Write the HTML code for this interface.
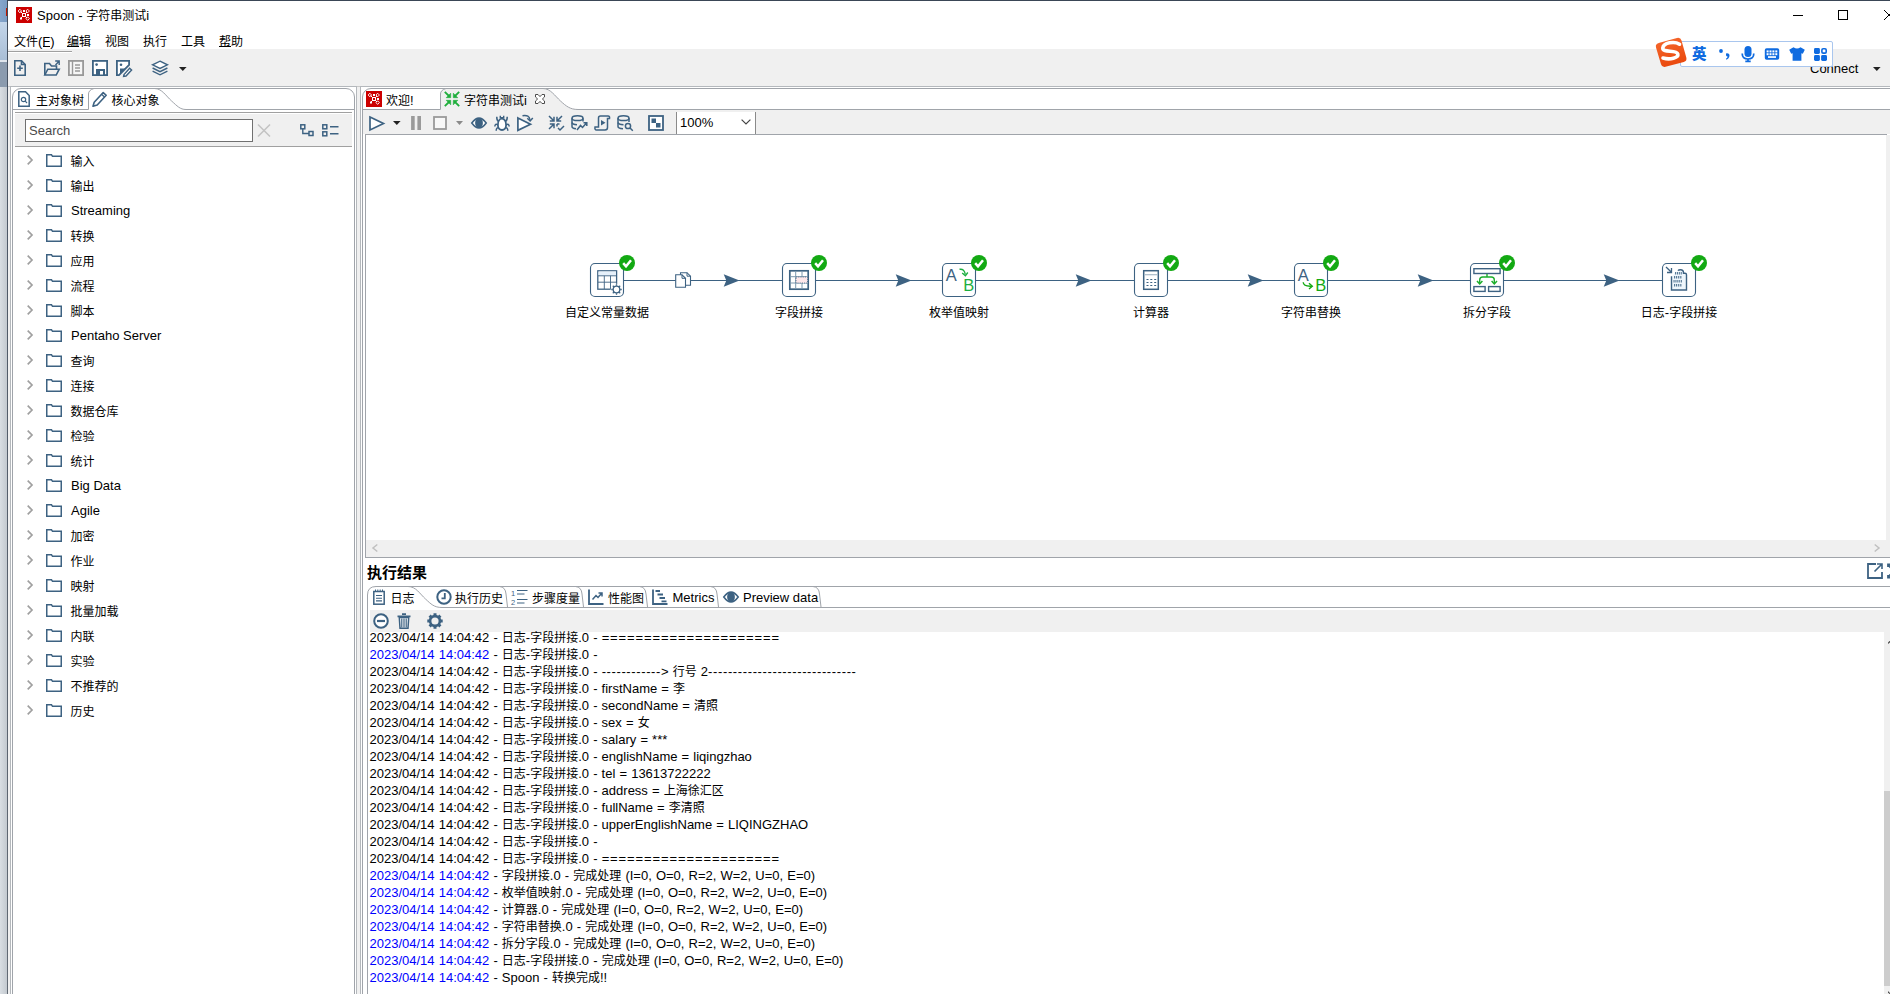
<!DOCTYPE html>
<html lang="zh-CN"><head><meta charset="utf-8"><title>Spoon</title>
<style>
html,body{margin:0;padding:0}
body{width:1890px;height:994px;overflow:hidden;position:relative;background:#fff;
 font-family:"Liberation Sans","Noto Sans CJK SC",sans-serif;font-size:13px;color:#000;line-height:16px}
.c{font-family:"Liberation Sans","Noto Sans CJK SC",sans-serif;font-size:12px;line-height:0}
.a{position:absolute}
.t{position:absolute;white-space:nowrap;height:16px;line-height:16px;margin-top:1px}
svg{position:absolute;overflow:visible}
.ln{position:absolute;background:#a0a0a0}
.bl{color:#0000ff}
.lg{word-spacing:0.5px}

</style></head>
<body>
<div class="a" style="left:0;top:0;width:7px;height:22px;background:linear-gradient(90deg,#86a6cc,#7a9bc2)"></div><div class="a" style="left:0;top:22px;width:7px;height:38px;background:linear-gradient(180deg,#c4d6ea,#a9bed6)"></div><div class="a" style="left:0;top:60px;width:7px;height:2px;background:#dfe5ec"></div><div class="a" style="left:0;top:62px;width:7px;height:25px;background:#8b9bae"></div><div class="a" style="left:0;top:87px;width:7px;height:907px;background:linear-gradient(90deg,#d9dee3,#c3c9cf)"></div><div class="a" style="left:6px;top:8px;width:1px;height:8px;background:#c01800"></div><div class="a" style="left:7px;top:0;width:1px;height:994px;background:linear-gradient(180deg,#3e4a5a 0,#4a5564 90px,#626a74 100%)"></div><div class="a" style="left:7px;top:0;width:1883px;height:1px;background:#3a4656"></div><div class="a" style="left:16px;top:7px;width:16px;height:16px;background:#cc0000"></div><svg style="left:16px;top:7px" width="16" height="16" viewBox="0 0 16 16"><g fill="none" stroke="#fff" stroke-width="1">
<rect x="6.5" y="6.5" width="3" height="3"/>
<path d="M6.5 6.5L4.5 4.5M9.5 6.5L11 5M6.5 9.5L5 11M9.5 9.5L11 11"/></g>
<g fill="#fff"><rect x="7" y="3" width="2" height="2"/><rect x="11" y="7" width="2" height="2"/><rect x="4" y="10.5" width="2" height="2"/></g>
<g fill="none" stroke="#fff" stroke-width="0.9"><path d="M3.8 2.2L5.6 4L3.8 5.8L2.2 4Z"/><path d="M11.6 2.2L13.4 4L11.6 5.8L10 4Z"/><path d="M11.6 9.8L13.4 11.6L11.6 13.4L10 11.6Z"/></g></svg><div class="t" style="left:37px;top:7px">Spoon - <span class="c">字符串测试</span>i</div><div class="a" style="left:1793px;top:15px;width:10px;height:1px;background:#000"></div><div class="a" style="left:1838px;top:10px;width:8px;height:8px;border:1px solid #000"></div><svg style="left:1884px;top:10px" width="10" height="10"><path d="M0 0L10 10M0 10L10 0" stroke="#000" stroke-width="1" fill="none"/></svg><div class="t" style="left:14px;top:33px"><span class="c">文件</span>(F)</div><div class="t" style="left:67px;top:33px"><span class="c">编辑</span></div><div class="t" style="left:105px;top:33px"><span class="c">视图</span></div><div class="t" style="left:143px;top:33px"><span class="c">执行</span></div><div class="t" style="left:181px;top:33px"><span class="c">工具</span></div><div class="t" style="left:219px;top:33px"><span class="c">帮助</span></div><div class="a" style="left:67px;top:46px;width:12px;height:1px;background:#000"></div><div class="a" style="left:219px;top:46px;width:12px;height:1px;background:#000"></div><div class="a" style="left:43px;top:46px;width:7px;height:1px;background:#000"></div><div class="a" style="left:8px;top:49px;width:1882px;height:945px;background:#f0f0f0"></div><div class="a" style="left:8px;top:51px;width:64px;height:1px;background:#a0a0a0"></div><div class="a" style="left:8px;top:52px;width:64px;height:1px;background:#fff"></div><svg style="left:14px;top:60px" width="12" height="16" viewBox="0 0 12 16"><path fill="none" stroke="#3d6282" stroke-width="1.6" d="M0.8 0.8H7.5L11.2 4.5V15.2H0.8Z"/><path fill="none" stroke="#3d6282" stroke-width="1.6" d="M7.5 0.8V4.5H11.2"/><path d="M6 5.5V11M3.2 8.2H8.8" stroke="#3d6282" stroke-width="1.6" fill="none"/></svg><svg style="left:44px;top:60px" width="16" height="16" viewBox="0 0 16 16"><path fill="none" stroke="#3d6282" stroke-width="1.6" d="M0.8 15V3.5H5.5L7.5 6H12.5V9"/><path fill="none" stroke="#3d6282" stroke-width="1.6" d="M0.8 15L3.8 9.2H15.2L12.2 15Z" fill="#fff"/><path d="M11.5 5L15 1.2M11.2 1H15.2V5" stroke="#3d6282" stroke-width="1.4" fill="none"/></svg><svg style="left:68px;top:60px" width="16" height="16" viewBox="0 0 16 16"><rect x="0.9" y="0.9" width="14.2" height="14.2" fill="#f6f6f6" stroke="#999" stroke-width="1.8"/><path d="M4.5 1V15" stroke="#999" stroke-width="1.4"/><path d="M7 5H12M7 8H12M7 11H12" stroke="#999" stroke-width="1.6"/></svg><svg style="left:92px;top:60px" width="16" height="16" viewBox="0 0 16 16"><rect x="0.9" y="0.9" width="14.2" height="14.2" fill="#fff" stroke="#3d6282" stroke-width="1.8"/><rect x="4" y="9" width="9" height="6.5" fill="#3d6282"/><rect x="8" y="11" width="3" height="3.5" fill="#fff"/><circle cx="4.6" cy="4.6" r="1.3" fill="#3d6282"/></svg><svg style="left:116px;top:60px" width="16" height="16" viewBox="0 0 16 16"><path d="M0.9 0.9H13.1V5L3 15.1H0.9Z" fill="#fff" stroke="#3d6282" stroke-width="1.8"/><path d="M4 8.5H10L4 14.5Z" fill="#3d6282"/><circle cx="5" cy="4.8" r="1.3" fill="#3d6282"/><path d="M8 14.6L13.6 8.2L15.6 10L10 16L7.6 16.4Z" fill="#fff" stroke="#3d6282" stroke-width="1.4"/></svg><svg style="left:152px;top:60px" width="16" height="16" viewBox="0 0 16 16"><path d="M8 1.2L15.4 4.8L8 8.4L0.6 4.8Z" fill="#fff" stroke="#3d6282" stroke-width="1.4"/><path d="M0.6 8L8 11.6L15.4 8M0.6 11.2L8 14.8L15.4 11.2" fill="none" stroke="#3d6282" stroke-width="1.4"/></svg><svg style="left:179px;top:67px" width="8" height="4" viewBox="0 0 8 4"><path d="M0 0H7.6L3.8 4Z" fill="#222"/></svg><div class="t" style="left:1810px;top:60px">Connect</div><svg style="left:1873px;top:67px" width="8" height="4" viewBox="0 0 8 4"><path d="M0 0H7.6L3.8 4Z" fill="#222"/></svg><div class="a" style="left:8px;top:86px;width:1882px;height:1px;background:#c8c8c8"></div><div class="a" style="left:1680px;top:41px;width:151px;height:24px;background:#fff;border:1px solid #a9c6ee;border-radius:2px"></div><svg style="left:1655px;top:37px" width="32" height="30" viewBox="0 0 32 30"><defs><linearGradient id="sg" x1="0" y1="0" x2="0.300" y2="1"><stop offset="0" stop-color="#f66a30"/><stop offset="1" stop-color="#ea4a0e"/></linearGradient></defs><path d="M4.500 5.800L22 0.900Q25.500 0 26.500 3.500L31.300 20.500Q32.200 24 28.800 25L10.500 29.800Q7 30.600 6 27.200L1 10.500Q0 7 4.500 5.800Z" fill="url(#sg)"/><path d="M24.500 7.200C19.500 4 8.500 5.500 7.800 11C7.300 16 21.500 12.500 22.800 17C23.800 21 15 23 8 21" fill="none" stroke="#fff" stroke-width="3.600" stroke-linecap="round"/></svg><div class="t" style="left:1692px;top:46px;font-weight:900;color:#0f6be0"><span class="c" style="font-size:14.500px">英</span></div><svg style="left:1718px;top:47px" width="14" height="14" viewBox="0 0 14 14"><circle cx="3" cy="4" r="1.900" fill="#0f6be0"/><path d="M8.300 6.200Q12.300 5.800 11.300 9.800Q10.700 11.800 8.500 12.800L7.900 11.700Q9.600 10.800 9.600 9.600Q7.200 9.200 8.300 6.200Z" fill="#0f6be0"/></svg><svg style="left:1741px;top:46px" width="14" height="17" viewBox="0 0 14 17"><rect x="3.500" y="0" width="7" height="11" rx="3.500" fill="#0f6be0"/><path d="M1.200 7.500Q1.200 13 7 13Q12.800 13 12.800 7.500" fill="none" stroke="#0f6be0" stroke-width="1.700"/><path d="M7 13V15.200M4.300 15.400H9.700" stroke="#0f6be0" stroke-width="1.700"/></svg><svg style="left:1764px;top:48px" width="16" height="12" viewBox="0 0 16 12"><rect x="0.800" y="0.300" width="14.400" height="11.400" rx="1.800" fill="#0f6be0"/><g fill="#fff"><rect x="2.600" y="2.400" width="2" height="2"/><rect x="5.500" y="2.400" width="2" height="2"/><rect x="8.400" y="2.400" width="2" height="2"/><rect x="11.300" y="2.400" width="2" height="2"/><rect x="2.600" y="5.200" width="2" height="2"/><rect x="5.500" y="5.200" width="2" height="2"/><rect x="8.400" y="5.200" width="2" height="2"/><rect x="11.300" y="5.200" width="2" height="2"/><rect x="4" y="8.200" width="8" height="1.700"/></g></svg><svg style="left:1788.5px;top:47px" width="16" height="14" viewBox="0 0 16 14"><path d="M4.500 0.300Q8 2.800 11.500 0.300L15.800 2.800L13.800 6.800L12.400 6.200V13.800H3.600V6.200L2.200 6.800L0.200 2.800Z" fill="#0f6be0"/></svg><svg style="left:1814px;top:48px" width="13" height="13" viewBox="0 0 13 13"><rect x="0" y="0" width="5.900" height="5.900" rx="1.400" fill="#0f6be0"/><rect x="7.100" y="7.100" width="5.900" height="5.900" rx="1.400" fill="#0f6be0"/><rect x="0" y="7.100" width="5.900" height="5.900" rx="1.400" fill="#0f6be0"/><rect x="7.900" y="0.800" width="4.300" height="4.300" rx="1.200" fill="none" stroke="#0f6be0" stroke-width="1.600"/></svg><div class="a" style="left:10px;top:86px;width:345px;height:920px;border:1px solid #b4b8bc;background:#fff"></div><div class="a" style="left:12px;top:88px;width:341px;height:920px;border:1px solid #a0a4aa;border-radius:9px 9px 0 0;background:#fff"></div><svg style="left:12px;top:88px" width="343" height="23" viewBox="0 0 343 23"><path d="M0.500 21.500H76.500V6Q76.500 2 82 0.500H142.500C150 0.500 154 8 159.600 13S168 21.500 174 21.500H342.500" fill="none" stroke="#a0a4aa"/></svg><svg style="left:18px;top:91px" width="12" height="16" viewBox="0 0 12 16"><path d="M0.8 0.8H7.5L11.2 4.5V15.2H0.8Z" fill="#fff" stroke="#3d6282" stroke-width="1.5"/><circle cx="5.500" cy="8.500" r="2.2" fill="none" stroke="#3d6282" stroke-width="1.2"/><path d="M7.2 10.200L9 12" stroke="#3d6282" stroke-width="1.2"/></svg><div class="t" style="left:36px;top:92px"><span class="c">主对象树</span></div><svg style="left:92px;top:91px" width="15" height="16" viewBox="0 0 15 16"><path d="M1 15.300L2.200 11.200L11.200 1.500L14.200 4.300L5.200 14Z" fill="#fff" stroke="#3d6282" stroke-width="1.600" stroke-linejoin="round"/><path d="M9.500 3.300L12.500 6.100" stroke="#3d6282" stroke-width="1.300"/></svg><div class="t" style="left:111.5px;top:92px"><span class="c">核心对象</span></div><div class="a" style="left:15px;top:112px;width:337px;height:1px;background:#a0a0a0"></div><div class="a" style="left:15px;top:114px;width:337px;height:32px;background:#f0f0f0"></div><div class="a" style="left:15px;top:146px;width:337px;height:1px;background:#a0a0a0"></div><div class="a" style="left:25px;top:119px;width:226px;height:21px;border:1px solid #707070;background:#fff"></div><div class="t" style="left:29px;top:122px;color:#4a4a4a">Search</div><svg style="left:257px;top:124px" width="14" height="13" viewBox="0 0 14 13"><path d="M1 0.500L13 12.500M13 0.500L1 12.500" stroke="#c4c4c4" stroke-width="1.6" fill="none"/></svg><svg style="left:300px;top:124px" width="14" height="13" viewBox="0 0 14 13"><rect x="0.8" y="0.8" width="4" height="4" fill="none" stroke="#3d6282" stroke-width="1.500"/><rect x="9" y="7.500" width="4" height="4" fill="none" stroke="#3d6282" stroke-width="1.500"/><path d="M2.800 5V9.500H9" fill="none" stroke="#3d6282" stroke-width="1.400"/></svg><svg style="left:322px;top:124px" width="17" height="13" viewBox="0 0 17 13"><rect x="0.8" y="0.8" width="4" height="4" fill="none" stroke="#3d6282" stroke-width="1.500"/><rect x="0.8" y="7.800" width="4" height="4" fill="none" stroke="#3d6282" stroke-width="1.500"/><path d="M8 2.800H16.500M8 9.800H16.500" stroke="#3d6282" stroke-width="1.400"/></svg><svg style="left:27px;top:155px" width="6" height="10" viewBox="0 0 6 10"><path d="M0.700 0.700L5 5L0.700 9.300" fill="none" stroke="#a0a0a0" stroke-width="1.700"/></svg><svg style="left:46px;top:153.5px" width="16" height="13" viewBox="0 0 16 13"><path d="M0.750 12.250V0.750H5.500L6.500 2.300H15.250V12.250Z" fill="#fff" stroke="#3d6282" stroke-width="1.500"/></svg><div class="t" style="left:70.5px;top:153px"><span class="c">输入</span></div><svg style="left:27px;top:180px" width="6" height="10" viewBox="0 0 6 10"><path d="M0.700 0.700L5 5L0.700 9.300" fill="none" stroke="#a0a0a0" stroke-width="1.700"/></svg><svg style="left:46px;top:178.5px" width="16" height="13" viewBox="0 0 16 13"><path d="M0.750 12.250V0.750H5.500L6.500 2.300H15.250V12.250Z" fill="#fff" stroke="#3d6282" stroke-width="1.500"/></svg><div class="t" style="left:70.5px;top:178px"><span class="c">输出</span></div><svg style="left:27px;top:205px" width="6" height="10" viewBox="0 0 6 10"><path d="M0.700 0.700L5 5L0.700 9.300" fill="none" stroke="#a0a0a0" stroke-width="1.700"/></svg><svg style="left:46px;top:203.5px" width="16" height="13" viewBox="0 0 16 13"><path d="M0.750 12.250V0.750H5.500L6.500 2.300H15.250V12.250Z" fill="#fff" stroke="#3d6282" stroke-width="1.500"/></svg><div class="t" style="left:71px;top:202px">Streaming</div><svg style="left:27px;top:230px" width="6" height="10" viewBox="0 0 6 10"><path d="M0.700 0.700L5 5L0.700 9.300" fill="none" stroke="#a0a0a0" stroke-width="1.700"/></svg><svg style="left:46px;top:228.5px" width="16" height="13" viewBox="0 0 16 13"><path d="M0.750 12.250V0.750H5.500L6.500 2.300H15.250V12.250Z" fill="#fff" stroke="#3d6282" stroke-width="1.500"/></svg><div class="t" style="left:70.5px;top:228px"><span class="c">转换</span></div><svg style="left:27px;top:255px" width="6" height="10" viewBox="0 0 6 10"><path d="M0.700 0.700L5 5L0.700 9.300" fill="none" stroke="#a0a0a0" stroke-width="1.700"/></svg><svg style="left:46px;top:253.5px" width="16" height="13" viewBox="0 0 16 13"><path d="M0.750 12.250V0.750H5.500L6.500 2.300H15.250V12.250Z" fill="#fff" stroke="#3d6282" stroke-width="1.500"/></svg><div class="t" style="left:70.5px;top:253px"><span class="c">应用</span></div><svg style="left:27px;top:280px" width="6" height="10" viewBox="0 0 6 10"><path d="M0.700 0.700L5 5L0.700 9.300" fill="none" stroke="#a0a0a0" stroke-width="1.700"/></svg><svg style="left:46px;top:278.5px" width="16" height="13" viewBox="0 0 16 13"><path d="M0.750 12.250V0.750H5.500L6.500 2.300H15.250V12.250Z" fill="#fff" stroke="#3d6282" stroke-width="1.500"/></svg><div class="t" style="left:70.5px;top:278px"><span class="c">流程</span></div><svg style="left:27px;top:305px" width="6" height="10" viewBox="0 0 6 10"><path d="M0.700 0.700L5 5L0.700 9.300" fill="none" stroke="#a0a0a0" stroke-width="1.700"/></svg><svg style="left:46px;top:303.5px" width="16" height="13" viewBox="0 0 16 13"><path d="M0.750 12.250V0.750H5.500L6.500 2.300H15.250V12.250Z" fill="#fff" stroke="#3d6282" stroke-width="1.500"/></svg><div class="t" style="left:70.5px;top:303px"><span class="c">脚本</span></div><svg style="left:27px;top:330px" width="6" height="10" viewBox="0 0 6 10"><path d="M0.700 0.700L5 5L0.700 9.300" fill="none" stroke="#a0a0a0" stroke-width="1.700"/></svg><svg style="left:46px;top:328.5px" width="16" height="13" viewBox="0 0 16 13"><path d="M0.750 12.250V0.750H5.500L6.500 2.300H15.250V12.250Z" fill="#fff" stroke="#3d6282" stroke-width="1.500"/></svg><div class="t" style="left:71px;top:327px">Pentaho Server</div><svg style="left:27px;top:355px" width="6" height="10" viewBox="0 0 6 10"><path d="M0.700 0.700L5 5L0.700 9.300" fill="none" stroke="#a0a0a0" stroke-width="1.700"/></svg><svg style="left:46px;top:353.5px" width="16" height="13" viewBox="0 0 16 13"><path d="M0.750 12.250V0.750H5.500L6.500 2.300H15.250V12.250Z" fill="#fff" stroke="#3d6282" stroke-width="1.500"/></svg><div class="t" style="left:70.5px;top:353px"><span class="c">查询</span></div><svg style="left:27px;top:380px" width="6" height="10" viewBox="0 0 6 10"><path d="M0.700 0.700L5 5L0.700 9.300" fill="none" stroke="#a0a0a0" stroke-width="1.700"/></svg><svg style="left:46px;top:378.5px" width="16" height="13" viewBox="0 0 16 13"><path d="M0.750 12.250V0.750H5.500L6.500 2.300H15.250V12.250Z" fill="#fff" stroke="#3d6282" stroke-width="1.500"/></svg><div class="t" style="left:70.5px;top:378px"><span class="c">连接</span></div><svg style="left:27px;top:405px" width="6" height="10" viewBox="0 0 6 10"><path d="M0.700 0.700L5 5L0.700 9.300" fill="none" stroke="#a0a0a0" stroke-width="1.700"/></svg><svg style="left:46px;top:403.5px" width="16" height="13" viewBox="0 0 16 13"><path d="M0.750 12.250V0.750H5.500L6.500 2.300H15.250V12.250Z" fill="#fff" stroke="#3d6282" stroke-width="1.500"/></svg><div class="t" style="left:70.5px;top:403px"><span class="c">数据仓库</span></div><svg style="left:27px;top:430px" width="6" height="10" viewBox="0 0 6 10"><path d="M0.700 0.700L5 5L0.700 9.300" fill="none" stroke="#a0a0a0" stroke-width="1.700"/></svg><svg style="left:46px;top:428.5px" width="16" height="13" viewBox="0 0 16 13"><path d="M0.750 12.250V0.750H5.500L6.500 2.300H15.250V12.250Z" fill="#fff" stroke="#3d6282" stroke-width="1.500"/></svg><div class="t" style="left:70.5px;top:428px"><span class="c">检验</span></div><svg style="left:27px;top:455px" width="6" height="10" viewBox="0 0 6 10"><path d="M0.700 0.700L5 5L0.700 9.300" fill="none" stroke="#a0a0a0" stroke-width="1.700"/></svg><svg style="left:46px;top:453.5px" width="16" height="13" viewBox="0 0 16 13"><path d="M0.750 12.250V0.750H5.500L6.500 2.300H15.250V12.250Z" fill="#fff" stroke="#3d6282" stroke-width="1.500"/></svg><div class="t" style="left:70.5px;top:453px"><span class="c">统计</span></div><svg style="left:27px;top:480px" width="6" height="10" viewBox="0 0 6 10"><path d="M0.700 0.700L5 5L0.700 9.300" fill="none" stroke="#a0a0a0" stroke-width="1.700"/></svg><svg style="left:46px;top:478.5px" width="16" height="13" viewBox="0 0 16 13"><path d="M0.750 12.250V0.750H5.500L6.500 2.300H15.250V12.250Z" fill="#fff" stroke="#3d6282" stroke-width="1.500"/></svg><div class="t" style="left:71px;top:477px">Big Data</div><svg style="left:27px;top:505px" width="6" height="10" viewBox="0 0 6 10"><path d="M0.700 0.700L5 5L0.700 9.300" fill="none" stroke="#a0a0a0" stroke-width="1.700"/></svg><svg style="left:46px;top:503.5px" width="16" height="13" viewBox="0 0 16 13"><path d="M0.750 12.250V0.750H5.500L6.500 2.300H15.250V12.250Z" fill="#fff" stroke="#3d6282" stroke-width="1.500"/></svg><div class="t" style="left:71px;top:502px">Agile</div><svg style="left:27px;top:530px" width="6" height="10" viewBox="0 0 6 10"><path d="M0.700 0.700L5 5L0.700 9.300" fill="none" stroke="#a0a0a0" stroke-width="1.700"/></svg><svg style="left:46px;top:528.5px" width="16" height="13" viewBox="0 0 16 13"><path d="M0.750 12.250V0.750H5.500L6.500 2.300H15.250V12.250Z" fill="#fff" stroke="#3d6282" stroke-width="1.500"/></svg><div class="t" style="left:70.5px;top:528px"><span class="c">加密</span></div><svg style="left:27px;top:555px" width="6" height="10" viewBox="0 0 6 10"><path d="M0.700 0.700L5 5L0.700 9.300" fill="none" stroke="#a0a0a0" stroke-width="1.700"/></svg><svg style="left:46px;top:553.5px" width="16" height="13" viewBox="0 0 16 13"><path d="M0.750 12.250V0.750H5.500L6.500 2.300H15.250V12.250Z" fill="#fff" stroke="#3d6282" stroke-width="1.500"/></svg><div class="t" style="left:70.5px;top:553px"><span class="c">作业</span></div><svg style="left:27px;top:580px" width="6" height="10" viewBox="0 0 6 10"><path d="M0.700 0.700L5 5L0.700 9.300" fill="none" stroke="#a0a0a0" stroke-width="1.700"/></svg><svg style="left:46px;top:578.5px" width="16" height="13" viewBox="0 0 16 13"><path d="M0.750 12.250V0.750H5.500L6.500 2.300H15.250V12.250Z" fill="#fff" stroke="#3d6282" stroke-width="1.500"/></svg><div class="t" style="left:70.5px;top:578px"><span class="c">映射</span></div><svg style="left:27px;top:605px" width="6" height="10" viewBox="0 0 6 10"><path d="M0.700 0.700L5 5L0.700 9.300" fill="none" stroke="#a0a0a0" stroke-width="1.700"/></svg><svg style="left:46px;top:603.5px" width="16" height="13" viewBox="0 0 16 13"><path d="M0.750 12.250V0.750H5.500L6.500 2.300H15.250V12.250Z" fill="#fff" stroke="#3d6282" stroke-width="1.500"/></svg><div class="t" style="left:70.5px;top:603px"><span class="c">批量加载</span></div><svg style="left:27px;top:630px" width="6" height="10" viewBox="0 0 6 10"><path d="M0.700 0.700L5 5L0.700 9.300" fill="none" stroke="#a0a0a0" stroke-width="1.700"/></svg><svg style="left:46px;top:628.5px" width="16" height="13" viewBox="0 0 16 13"><path d="M0.750 12.250V0.750H5.500L6.500 2.300H15.250V12.250Z" fill="#fff" stroke="#3d6282" stroke-width="1.500"/></svg><div class="t" style="left:70.5px;top:628px"><span class="c">内联</span></div><svg style="left:27px;top:655px" width="6" height="10" viewBox="0 0 6 10"><path d="M0.700 0.700L5 5L0.700 9.300" fill="none" stroke="#a0a0a0" stroke-width="1.700"/></svg><svg style="left:46px;top:653.5px" width="16" height="13" viewBox="0 0 16 13"><path d="M0.750 12.250V0.750H5.500L6.500 2.300H15.250V12.250Z" fill="#fff" stroke="#3d6282" stroke-width="1.500"/></svg><div class="t" style="left:70.5px;top:653px"><span class="c">实验</span></div><svg style="left:27px;top:680px" width="6" height="10" viewBox="0 0 6 10"><path d="M0.700 0.700L5 5L0.700 9.300" fill="none" stroke="#a0a0a0" stroke-width="1.700"/></svg><svg style="left:46px;top:678.5px" width="16" height="13" viewBox="0 0 16 13"><path d="M0.750 12.250V0.750H5.500L6.500 2.300H15.250V12.250Z" fill="#fff" stroke="#3d6282" stroke-width="1.500"/></svg><div class="t" style="left:70.5px;top:678px"><span class="c">不推荐的</span></div><svg style="left:27px;top:705px" width="6" height="10" viewBox="0 0 6 10"><path d="M0.700 0.700L5 5L0.700 9.300" fill="none" stroke="#a0a0a0" stroke-width="1.700"/></svg><svg style="left:46px;top:703.5px" width="16" height="13" viewBox="0 0 16 13"><path d="M0.750 12.250V0.750H5.500L6.500 2.300H15.250V12.250Z" fill="#fff" stroke="#3d6282" stroke-width="1.500"/></svg><div class="t" style="left:70.5px;top:703px"><span class="c">历史</span></div><div class="a" style="left:360px;top:86px;width:1540px;height:920px;border:1px solid #b4b8bc;background:#fff"></div><div class="a" style="left:362px;top:88px;width:1540px;height:920px;border:1px solid #a0a4aa;border-radius:9px 0 0 0;background:#fff"></div><div class="a" style="left:363px;top:110px;width:1527px;height:24px;background:#f0f0f0"></div><svg style="left:362px;top:88px" width="1528" height="23" viewBox="0 0 1528 23"><path d="M78.500 22V6Q78.500 2 84 0.500H181C188.500 0.500 193 8 198.500 13S208 21.500 216 21.500V23H78.500Z" fill="#f0f0f0"/><path d="M0.500 21.500H78.500V6Q78.500 2 84 0.500H181C188.500 0.500 193 8 198.500 13S208 21.500 216 21.500H1528" fill="none" stroke="#a0a4aa"/></svg><div class="a" style="left:366px;top:91px;width:16px;height:16px;background:#cc0000"></div><svg style="left:366px;top:91px" width="16" height="16" viewBox="0 0 16 16"><g fill="none" stroke="#fff" stroke-width="1">
<rect x="6.5" y="6.5" width="3" height="3"/>
<path d="M6.5 6.5L4.5 4.5M9.5 6.5L11 5M6.5 9.5L5 11M9.5 9.5L11 11"/></g>
<g fill="#fff"><rect x="7" y="3" width="2" height="2"/><rect x="11" y="7" width="2" height="2"/><rect x="4" y="10.5" width="2" height="2"/></g>
<g fill="none" stroke="#fff" stroke-width="0.9"><path d="M3.8 2.2L5.6 4L3.8 5.8L2.2 4Z"/><path d="M11.6 2.2L13.4 4L11.6 5.8L10 4Z"/><path d="M11.6 9.8L13.4 11.6L11.6 13.4L10 11.6Z"/></g></svg><div class="t" style="left:386px;top:92px"><span class="c">欢迎</span>!</div><svg style="left:444px;top:91px" width="16" height="16" viewBox="0 0 16 16"><g stroke="#1fae3c" stroke-width="1.800" fill="#1fae3c"><path d="M0.800 0.800L5 5" fill="none"/><path d="M2.200 6.700H6.700V2.200Z" stroke-width="0.600"/><path d="M15.200 0.800L11 5" fill="none"/><path d="M13.800 6.700H9.300V2.200Z" stroke-width="0.600"/><path d="M0.800 15.200L5 11" fill="none"/><path d="M2.200 9.300H6.700V13.800Z" stroke-width="0.600"/><path d="M15.200 15.200L11 11" fill="none"/><path d="M13.800 9.300H9.300V13.800Z" stroke-width="0.600"/></g></svg><div class="t" style="left:464px;top:92px"><span class="c">字符串测试</span>i</div><svg style="left:535px;top:94px" width="10" height="10" viewBox="0 0 10 10"><path d="M0.500 0.500H3L5 2.600L7 0.500H9.500V3L7.400 5L9.500 7V9.500H7L5 7.400L3 9.500H0.500V7L2.600 5L0.500 3Z" fill="#fff" stroke="#4a4a4a" stroke-width="1"/></svg><svg style="left:369px;top:116px" width="16" height="15" viewBox="0 0 16 15"><path d="M1 1L14.500 7.500L1 14Z" fill="#fff" stroke="#3d6282" stroke-width="1.700" stroke-linejoin="miter"/></svg><svg style="left:393px;top:121px" width="8" height="4" viewBox="0 0 8 4"><path d="M0 0H7.600L3.800 4Z" fill="#222"/></svg><svg style="left:411px;top:116px" width="10" height="14" viewBox="0 0 10 14"><path d="M1.900 0V14M8.200 0V14" stroke="#9a9a9a" stroke-width="3.600"/></svg><svg style="left:433px;top:116px" width="14" height="14" viewBox="0 0 14 14"><rect x="1" y="1" width="12" height="12" fill="#f8f8f8" stroke="#9a9a9a" stroke-width="1.800"/></svg><svg style="left:456px;top:121px" width="8" height="4" viewBox="0 0 8 4"><path d="M0 0H7L3.500 4Z" fill="#8a8a8a"/></svg><svg style="left:471px;top:117px" width="16" height="12" viewBox="0 0 16 12"><path d="M0.800 6Q8 -3.800 15.200 6Q8 15.800 0.800 6Z" fill="#fff" stroke="#3d6282" stroke-width="1.600"/><ellipse cx="8" cy="6" rx="3.900" ry="4.900" fill="#3d6282"/></svg><svg style="left:494px;top:115px" width="16" height="16" viewBox="0 0 16 16"><path d="M8 3.600C5.200 3.600 3.900 7 3.900 10C3.900 13 5.700 15 8 15C10.300 15 12.100 13 12.100 10C12.100 7 10.800 3.600 8 3.600Z" fill="#fff" stroke="#3d6282" stroke-width="1.800"/><path d="M6.300 3.500V0.800M9.700 3.500V0.800M6.300 2.600H9.700" fill="none" stroke="#3d6282" stroke-width="1.400"/><path d="M4.600 6.500Q2.600 5.500 2.800 1.800M11.400 6.500Q13.400 5.500 13.200 1.800M3.900 9.800Q1.200 8 0.800 11.500M12.100 9.800Q14.800 8 15.200 11.500M4.500 12.800Q2.200 12.500 2.200 15.800M11.500 12.800Q13.800 12.500 13.800 15.800" fill="none" stroke="#3d6282" stroke-width="1.500"/></svg><svg style="left:517px;top:115px" width="17" height="16" viewBox="0 0 17 16"><path d="M0.900 3L13.500 9.300L0.900 15.300Z" fill="#fff" stroke="#3d6282" stroke-width="1.700"/><path d="M5.500 0.700Q12.500 -0.500 13 5" fill="none" stroke="#3d6282" stroke-width="1.400"/><path d="M10.300 3.300L13.100 6L15.800 3" fill="none" stroke="#3d6282" stroke-width="1.500"/></svg><svg style="left:548px;top:115px" width="17" height="16" viewBox="0 0 17 16"><g fill="none" stroke="#3d6282" stroke-width="1.500"><path d="M1 1L5.500 5.500M1.800 6H6V1.800"/><path d="M14 1L9.500 5.500M13.200 6H9V1.800"/><path d="M1 14L5.500 9.500M1.800 9H6V13.200"/><path d="M9 9H11.500M9 9V11.500"/><path d="M10 13L12 15L16 11"/></g></svg><svg style="left:571px;top:115px" width="17" height="16" viewBox="0 0 17 16"><g fill="none" stroke="#3d6282" stroke-width="1.500"><ellipse cx="6.500" cy="3.200" rx="5.500" ry="2.400"/><path d="M1 3.200V11.500Q1 13.500 5 13.800M12 3.200V6.500"/><path d="M1 7.500Q1.500 9.500 6 9.700"/><path d="M6 15L9.500 10.500L11.500 12.500L15.500 8M12.500 7.800H15.800V11"/></g></svg><svg style="left:594px;top:115px" width="17" height="16" viewBox="0 0 17 16"><g fill="none" stroke="#3d6282" stroke-width="1.500"><path d="M4.500 12V3Q4.500 1 6.500 1H14Q16 1 15.500 3.500H13.500V12.500Q13.500 15 11 15H2.500Q0.500 15 1 12Z"/></g><path d="M7 5L11.500 7.800L7 10.600Z" fill="#3d6282"/></svg><svg style="left:617px;top:115px" width="17" height="16" viewBox="0 0 17 16"><g fill="none" stroke="#3d6282" stroke-width="1.500"><ellipse cx="6.500" cy="3.200" rx="5.500" ry="2.400"/><path d="M1 3.200V11.500Q1 13.500 6 13.800M12 3.200V7"/><path d="M1 7.500Q1.500 9.500 6.500 9.700"/><circle cx="11" cy="11" r="2.600"/><path d="M13 13L15.800 15.800"/></g></svg><svg style="left:648px;top:115px" width="16" height="16" viewBox="0 0 16 16"><rect x="1" y="1" width="14" height="14" fill="#fff" stroke="#3d6282" stroke-width="1.800"/><rect x="3.500" y="3.500" width="4.500" height="4.500" fill="#3d6282"/><rect x="8" y="8" width="4.500" height="4.500" fill="#3d6282"/></svg><div class="a" style="left:676px;top:112px;width:78px;height:22px;background:#fff;border-left:1px solid #8a8a8a;border-right:1px solid #8a8a8a"></div><div class="t" style="left:680px;top:114px">100%</div><svg style="left:741px;top:119px" width="10" height="6" viewBox="0 0 10 6"><path d="M0.600 0.600L5 5L9.400 0.600" fill="none" stroke="#444" stroke-width="1.200"/></svg><div class="a" style="left:365px;top:134px;width:1521px;height:422px;border:1px solid #a0a4aa;border-right:none;background:#fff"></div><div class="a" style="left:1886px;top:135px;width:4px;height:405px;background:#f0f0f0"></div><div class="a" style="left:366px;top:540px;width:1524px;height:17px;background:#f0f0f0"></div><svg style="left:372px;top:544px" width="6" height="8" viewBox="0 0 6 8"><path d="M5.300 0.500L1 4L5.300 7.500" fill="none" stroke="#c0c0c0" stroke-width="1.500"/></svg><svg style="left:1874px;top:544px" width="6" height="8" viewBox="0 0 6 8"><path d="M0.700 0.500L5 4L0.700 7.500" fill="none" stroke="#c0c0c0" stroke-width="1.500"/></svg><div class="a" style="left:365px;top:557px;width:1525px;height:1px;background:#a0a4aa"></div><div class="t" style="left:367px;top:565px;font-weight:bold"><span class="c" style="font-size:15px">执行结果</span></div><svg style="left:1867px;top:563px" width="16" height="16" viewBox="0 0 16 16"><path d="M9 1H1V15H15V9" fill="none" stroke="#3d6282" stroke-width="1.800"/><path d="M7.500 8.500L14.500 1.500M10 1H15V6" fill="none" stroke="#3d6282" stroke-width="1.600"/></svg><svg style="left:1887px;top:563px" width="8" height="16" viewBox="0 0 8 16"><path d="M1 2L6 7M1 14L6 9M1 4V1.500H4M1 12V14.500H4" fill="none" stroke="#3d6282" stroke-width="1.800"/></svg><svg style="left:366px;top:135px" width="1520" height="405" viewBox="366 135 1520 405"><path d="M624 280.500H1662" stroke="#3d6282" stroke-width="1.100" fill="none"/><path d="M739.5 280.500L723.7 274.300L726.3 280.500L723.7 286.700Z" fill="#3d6282"/><path d="M911.5 280.500L895.7 274.300L898.3 280.500L895.7 286.700Z" fill="#3d6282"/><path d="M1091.5 280.500L1075.7 274.300L1078.3 280.500L1075.7 286.700Z" fill="#3d6282"/><path d="M1263.5 280.500L1247.7 274.300L1250.3 280.500L1247.7 286.700Z" fill="#3d6282"/><path d="M1433.5 280.500L1417.7 274.300L1420.3 280.500L1417.7 286.700Z" fill="#3d6282"/><path d="M1619.5 280.500L1603.7 274.300L1606.3 280.500L1603.7 286.700Z" fill="#3d6282"/><path d="M680.500 272.700H687L690.500 276.200V285.300H680.500Z" fill="#fff" stroke="#3d6282" stroke-width="1.100"/><path d="M687 272.700V276.200H690.500" fill="none" stroke="#3d6282"/><path d="M675.700 274.800H682L685.500 278.300V287.300H675.700Z" fill="#fff" stroke="#3d6282" stroke-width="1.100"/><path d="M682 274.800V278.300H685.500" fill="none" stroke="#3d6282"/><rect x="590.5" y="263.500" width="33" height="33" rx="4.500" fill="#fff" stroke="#3d6282" stroke-width="1.100"/><g transform="translate(590,263)"><rect x="7.800" y="7.800" width="18.800" height="18.400" fill="#fff" stroke="#3d6282" stroke-width="1.300"/><rect x="8.500" y="8.500" width="17.500" height="4" fill="#e6f0fa"/><path d="M8 12.800H26.500M8 19.200H26.500M14.300 12.800V26M20.500 12.800V26" stroke="#3d6282" stroke-width="0.900" fill="none"/><circle cx="26.500" cy="26.500" r="5.800" fill="#fff"/><circle cx="26.500" cy="26.500" r="3.300" fill="#fff" stroke="#3d6282" stroke-width="1.300"/><path d="M26.500 21.300V22.800M26.500 30.200V31.700M21.300 26.500H22.800M30.200 26.500H31.700M22.800 22.800L23.900 23.900M29.100 29.100L30.200 30.200M22.800 30.200L23.900 29.100M29.100 23.900L30.200 22.800" stroke="#3d6282" stroke-width="1.300" fill="none"/></g><circle cx="627" cy="263" r="8" fill="#13a913"/><path d="M623.2 263.200L626 266.300L631 260.300" fill="none" stroke="#fff" stroke-width="2.500"/><rect x="782.5" y="263.500" width="33" height="33" rx="4.500" fill="#fff" stroke="#3d6282" stroke-width="1.100"/><g transform="translate(782,263)"><rect x="7.800" y="7.800" width="18.400" height="18.400" fill="#fff" stroke="#3d6282" stroke-width="1.700"/><path d="M13.700 8V26M20 8V26M8 13.700H26M8 20H26" stroke="#7d98ae" stroke-width="1" fill="none"/><rect x="14" y="14" width="11.500" height="6" fill="#fde6e9" stroke="#3d6282" stroke-width="0.800" stroke-dasharray="1.200 1"/></g><circle cx="819" cy="263" r="8" fill="#13a913"/><path d="M815.2 263.200L818 266.300L823 260.300" fill="none" stroke="#fff" stroke-width="2.500"/><rect x="942.5" y="263.500" width="33" height="33" rx="4.500" fill="#fff" stroke="#3d6282" stroke-width="1.100"/><g transform="translate(942,263)"><text x="3.800" y="17.600" font-family="Liberation Sans,sans-serif" font-size="16.500" fill="#3d6282">A</text><text x="21.300" y="28.400" font-family="Liberation Sans,sans-serif" font-size="16.500" fill="#1cae40">B</text><path d="M17.500 6.300Q22.500 5.500 23.300 11.500" fill="none" stroke="#1cae40" stroke-width="1.400"/><path d="M20.200 10L23.400 12.800L25.800 9.500" fill="none" stroke="#1cae40" stroke-width="1.400"/></g><circle cx="979" cy="263" r="8" fill="#13a913"/><path d="M975.2 263.200L978 266.300L983 260.300" fill="none" stroke="#fff" stroke-width="2.500"/><rect x="1134.5" y="263.500" width="33" height="33" rx="4.500" fill="#fff" stroke="#3d6282" stroke-width="1.100"/><g transform="translate(1134,263)"><rect x="9.700" y="7.700" width="14.600" height="18.600" fill="#fff" stroke="#3d6282" stroke-width="1.500"/><path d="M10.500 11.700H23.500" stroke="#a9bac8" stroke-width="1.200"/><path d="M12.500 16.500H14.500M16.300 16.500H18.300M20.200 16.500H22.200M12.500 19.500H14.500M16.300 19.500H18.300M20.200 19.500H22.200M12.500 22.500H14.500M16.300 22.500H18.300M20.200 22.500H22.200" stroke="#3d6282" stroke-width="1"/></g><circle cx="1171" cy="263" r="8" fill="#13a913"/><path d="M1167.2 263.200L1170 266.300L1175 260.300" fill="none" stroke="#fff" stroke-width="2.500"/><rect x="1294.5" y="263.500" width="33" height="33" rx="4.500" fill="#fff" stroke="#3d6282" stroke-width="1.100"/><g transform="translate(1294,263)"><text x="3.800" y="17.600" font-family="Liberation Sans,sans-serif" font-size="16.500" fill="#3d6282">A</text><text x="21.300" y="28.400" font-family="Liberation Sans,sans-serif" font-size="16.500" fill="#13a913">B</text><path d="M9.200 19.300Q9.500 23.600 17.500 23.200" fill="none" stroke="#13a913" stroke-width="1.400"/><path d="M15 20.300L18.300 23.200L15 26" fill="none" stroke="#13a913" stroke-width="1.400"/></g><circle cx="1331" cy="263" r="8" fill="#13a913"/><path d="M1327.2 263.200L1330 266.300L1335 260.300" fill="none" stroke="#fff" stroke-width="2.500"/><rect x="1470.5" y="263.500" width="33" height="33" rx="4.500" fill="#fff" stroke="#3d6282" stroke-width="1.100"/><g transform="translate(1470,263)"><rect x="3.900" y="5.700" width="26.200" height="4.800" fill="#fff" stroke="#3d6282" stroke-width="1.400"/><rect x="3.900" y="23.600" width="11.200" height="4.800" fill="#fff" stroke="#3d6282" stroke-width="1.400"/><rect x="18.600" y="23.600" width="11.500" height="4.800" fill="#fff" stroke="#3d6282" stroke-width="1.400"/><path d="M17 11V14M9.700 20.500V17Q9.700 14 12.700 14H21.300Q24.300 14 24.300 17V20.500" fill="none" stroke="#1cae2c" stroke-width="1.400"/><path d="M7 18L9.700 21L12.400 18M21.600 18L24.300 21L27 18" fill="none" stroke="#1cae2c" stroke-width="1.500"/></g><circle cx="1507" cy="263" r="8" fill="#13a913"/><path d="M1503.2 263.200L1506 266.300L1511 260.300" fill="none" stroke="#fff" stroke-width="2.500"/><rect x="1662.5" y="263.500" width="33" height="33" rx="4.500" fill="#fff" stroke="#3d6282" stroke-width="1.100"/><g transform="translate(1662,263)"><path d="M4 4L9.200 9M9.500 5V9.500H5" fill="none" stroke="#3d6282" stroke-width="1.300"/><path d="M9.500 13.500V27H24.500V10.200H21.500L21 7.500L13 9L10.500 13.500Z" fill="#eef6fc"/><path d="M9.500 13.300V27H24.500V11.700Q24.500 10.200 23 10.200H21.500V9.500Q21.500 6.700 18.500 6.700Q16.600 6.700 16 7.600" fill="none" stroke="#3d6282" stroke-width="1.400"/><path d="M13 10.300H20M12 14.300H20M11.500 18.300H20M12 22.300H20" stroke="#587a96" stroke-width="2.600" stroke-dasharray="1.100 0.800"/></g><circle cx="1699" cy="263" r="8" fill="#13a913"/><path d="M1695.2 263.200L1698 266.300L1703 260.300" fill="none" stroke="#fff" stroke-width="2.500"/></svg><div class="t" style="left:507px;top:304px;width:200px;text-align:center"><span class="c">自定义常量数据</span></div><div class="t" style="left:699px;top:304px;width:200px;text-align:center"><span class="c">字段拼接</span></div><div class="t" style="left:859px;top:304px;width:200px;text-align:center"><span class="c">枚举值映射</span></div><div class="t" style="left:1051px;top:304px;width:200px;text-align:center"><span class="c">计算器</span></div><div class="t" style="left:1211px;top:304px;width:200px;text-align:center"><span class="c">字符串替换</span></div><div class="t" style="left:1387px;top:304px;width:200px;text-align:center"><span class="c">拆分字段</span></div><div class="t" style="left:1579px;top:304px;width:200px;text-align:center"><span class="c">日志</span>-<span class="c">字段拼接</span></div><svg style="left:367px;top:586px" width="1523" height="23" viewBox="0 0 1523 23"><path d="M0.500 430V9Q0.500 0.500 9 0.500H1523" fill="none" stroke="#a0a4aa"/><path d="M41 0.500C49 0.500 53 8 58.500 13S67 21.500 75 21.500H1523" fill="none" stroke="#a0a4aa"/><path d="M132.500 0.500Q138.500 1 139 8L140.500 21" fill="none" stroke="#a0a4aa"/><path d="M208.500 0.500Q214.500 1 215 8L216.500 21" fill="none" stroke="#a0a4aa"/><path d="M272.500 0.500Q278.500 1 279 8L280.500 21" fill="none" stroke="#a0a4aa"/><path d="M343.500 0.500Q349.500 1 350 8L351.500 21" fill="none" stroke="#a0a4aa"/><path d="M446 0.500Q452 1 452.500 8L454 21" fill="none" stroke="#a0a4aa"/></svg><svg style="left:373px;top:589px" width="12" height="16" viewBox="0 0 12 16"><rect x="0.800" y="2.500" width="10.400" height="12.700" fill="#fff" stroke="#3d6282" stroke-width="1.500"/><path d="M2.500 0.500V3M4.800 0.500V3M7.200 0.500V3M9.500 0.500V3" stroke="#3d6282" stroke-width="1"/><path d="M3 6.500H9M3 9.200H9M3 11.900H9" stroke="#3d6282" stroke-width="1.100"/></svg><div class="t" style="left:390.5px;top:590px"><span class="c">日志</span></div><svg style="left:436px;top:589px" width="16" height="16" viewBox="0 0 16 16"><circle cx="8" cy="8" r="6.700" fill="#fff" stroke="#3d6282" stroke-width="2"/><path d="M8.800 4V9.300H5.500" fill="none" stroke="#3d6282" stroke-width="1.800"/></svg><div class="t" style="left:455px;top:590px"><span class="c">执行历史</span></div><svg style="left:511px;top:589px" width="17" height="16" viewBox="0 0 17 16"><text x="0" y="6.500" font-family="Liberation Sans,sans-serif" font-size="7.500" fill="#3d6282">1</text><text x="0" y="15.500" font-family="Liberation Sans,sans-serif" font-size="7.500" fill="#3d6282">2</text><path d="M6 1.500H16.500M6 5H13.500M6 10.500H16.500M6 14H13.500" stroke="#3d6282" stroke-width="1.200"/></svg><div class="t" style="left:532px;top:590px"><span class="c">步骤度量</span></div><svg style="left:588px;top:589px" width="16" height="16" viewBox="0 0 16 16"><path d="M1 0.500V15H15.500" fill="none" stroke="#3d6282" stroke-width="1.800"/><path d="M4.500 10.500L8 6.500L10 8.500L13.500 4.500M10.500 4H14V7.500" fill="none" stroke="#3d6282" stroke-width="1.500"/></svg><div class="t" style="left:608px;top:590px"><span class="c">性能图</span></div><svg style="left:652px;top:589px" width="16" height="16" viewBox="0 0 16 16"><path d="M1 0.500V15H15.500" fill="none" stroke="#3d6282" stroke-width="1.800"/><path d="M3.500 2H8M5.500 5.500H11M7.500 9H13M9.500 12.300H14.500" stroke="#3d6282" stroke-width="1.800"/></svg><div class="t" style="left:672.5px;top:589px">Metrics</div><svg style="left:723px;top:591px" width="16" height="12" viewBox="0 0 16 12"><path d="M0.800 6Q8 -3.800 15.200 6Q8 15.800 0.800 6Z" fill="#fff" stroke="#3d6282" stroke-width="1.600"/><ellipse cx="8" cy="6" rx="3.900" ry="4.900" fill="#3d6282"/></svg><div class="t" style="left:743px;top:589px">Preview data</div><div class="a" style="left:370px;top:610px;width:1520px;height:22px;background:#f0f0f0"></div><svg style="left:373px;top:613px" width="16" height="16" viewBox="0 0 16 16"><circle cx="8" cy="8" r="6.800" fill="#fff" stroke="#3d6282" stroke-width="2"/><path d="M4 8H12" stroke="#3d6282" stroke-width="2.200"/></svg><svg style="left:397px;top:613px" width="14" height="16" viewBox="0 0 14 16"><path d="M2.300 4.500H11.700L11 15.200H3Z" fill="#fff" stroke="#3d6282" stroke-width="1.500"/><path d="M0.500 3.400H13.500M5 1.200H9" stroke="#3d6282" stroke-width="1.800"/><path d="M4.800 5.500V14.500M7 5.500V14.500M9.200 5.500V14.500" stroke="#3d6282" stroke-width="1.200"/></svg><svg style="left:427px;top:613px" width="16" height="16" viewBox="0 0 16 16"><path d="M8 0.300V3M8 13V15.700M0.300 8H3M13 8H15.700M2.600 2.600L4.500 4.500M11.500 11.500L13.400 13.400M2.600 13.400L4.500 11.500M11.500 4.500L13.400 2.600" stroke="#3d6282" stroke-width="3" fill="none"/><circle cx="8" cy="8" r="4.900" fill="#f0f0f0" stroke="#3d6282" stroke-width="2.600"/></svg><div class="a" style="left:370px;top:632px;width:1514px;height:362px;background:#fff"></div><div class="t lg" style="left:369.5px;top:629px"><span>2023/04/14 14:04:42</span> - <span class="c">日志</span>-<span class="c">字段拼接</span>.0 - <span style="letter-spacing:0.900px">=====================</span></div><div class="t lg" style="left:369.5px;top:646px"><span class="bl">2023/04/14 14:04:42</span> - <span class="c">日志</span>-<span class="c">字段拼接</span>.0 - </div><div class="t lg" style="left:369.5px;top:663px"><span>2023/04/14 14:04:42</span> - <span class="c">日志</span>-<span class="c">字段拼接</span>.0 - <span style="letter-spacing:0.620px">------------</span>&gt; <span class="c">行号</span> 2<span style="letter-spacing:0.620px">------------------------------</span></div><div class="t lg" style="left:369.5px;top:680px"><span>2023/04/14 14:04:42</span> - <span class="c">日志</span>-<span class="c">字段拼接</span>.0 - firstName = <span class="c">李</span></div><div class="t lg" style="left:369.5px;top:697px"><span>2023/04/14 14:04:42</span> - <span class="c">日志</span>-<span class="c">字段拼接</span>.0 - secondName = <span class="c">清照</span></div><div class="t lg" style="left:369.5px;top:714px"><span>2023/04/14 14:04:42</span> - <span class="c">日志</span>-<span class="c">字段拼接</span>.0 - sex = <span class="c">女</span></div><div class="t lg" style="left:369.5px;top:731px"><span>2023/04/14 14:04:42</span> - <span class="c">日志</span>-<span class="c">字段拼接</span>.0 - salary = ***</div><div class="t lg" style="left:369.5px;top:748px"><span>2023/04/14 14:04:42</span> - <span class="c">日志</span>-<span class="c">字段拼接</span>.0 - englishName = liqingzhao</div><div class="t lg" style="left:369.5px;top:765px"><span>2023/04/14 14:04:42</span> - <span class="c">日志</span>-<span class="c">字段拼接</span>.0 - tel = 13613722222</div><div class="t lg" style="left:369.5px;top:782px"><span>2023/04/14 14:04:42</span> - <span class="c">日志</span>-<span class="c">字段拼接</span>.0 - address = <span class="c">上海徐汇区</span></div><div class="t lg" style="left:369.5px;top:799px"><span>2023/04/14 14:04:42</span> - <span class="c">日志</span>-<span class="c">字段拼接</span>.0 - fullName = <span class="c">李清照</span></div><div class="t lg" style="left:369.5px;top:816px"><span>2023/04/14 14:04:42</span> - <span class="c">日志</span>-<span class="c">字段拼接</span>.0 - upperEnglishName = LIQINGZHAO</div><div class="t lg" style="left:369.5px;top:833px"><span>2023/04/14 14:04:42</span> - <span class="c">日志</span>-<span class="c">字段拼接</span>.0 - </div><div class="t lg" style="left:369.5px;top:850px"><span>2023/04/14 14:04:42</span> - <span class="c">日志</span>-<span class="c">字段拼接</span>.0 - <span style="letter-spacing:0.900px">=====================</span></div><div class="t lg" style="left:369.5px;top:867px"><span class="bl">2023/04/14 14:04:42</span> - <span class="c">字段拼接</span>.0 - <span class="c">完成处理</span> (I=0, O=0, R=2, W=2, U=0, E=0)</div><div class="t lg" style="left:369.5px;top:884px"><span class="bl">2023/04/14 14:04:42</span> - <span class="c">枚举值映射</span>.0 - <span class="c">完成处理</span> (I=0, O=0, R=2, W=2, U=0, E=0)</div><div class="t lg" style="left:369.5px;top:901px"><span class="bl">2023/04/14 14:04:42</span> - <span class="c">计算器</span>.0 - <span class="c">完成处理</span> (I=0, O=0, R=2, W=2, U=0, E=0)</div><div class="t lg" style="left:369.5px;top:918px"><span class="bl">2023/04/14 14:04:42</span> - <span class="c">字符串替换</span>.0 - <span class="c">完成处理</span> (I=0, O=0, R=2, W=2, U=0, E=0)</div><div class="t lg" style="left:369.5px;top:935px"><span class="bl">2023/04/14 14:04:42</span> - <span class="c">拆分字段</span>.0 - <span class="c">完成处理</span> (I=0, O=0, R=2, W=2, U=0, E=0)</div><div class="t lg" style="left:369.5px;top:952px"><span class="bl">2023/04/14 14:04:42</span> - <span class="c">日志</span>-<span class="c">字段拼接</span>.0 - <span class="c">完成处理</span> (I=0, O=0, R=2, W=2, U=0, E=0)</div><div class="t lg" style="left:369.5px;top:969px"><span class="bl">2023/04/14 14:04:42</span> - Spoon - <span class="c">转换完成</span>!!</div><div class="a" style="left:1884px;top:632px;width:6px;height:362px;background:#f0f0f0"></div><div class="a" style="left:1884px;top:791px;width:6px;height:195px;background:#cdcdcd"></div><svg style="left:1888px;top:640px" width="3" height="4" viewBox="0 0 3 4"><path d="M2.500 0L0 2.500V4L2.500 2Z" fill="#505050"/></svg><svg style="left:1888px;top:991px" width="3" height="4" viewBox="0 0 3 4"><path d="M0 0L2.500 2.500V4L0 1.500Z" fill="#505050"/></svg></body></html>
